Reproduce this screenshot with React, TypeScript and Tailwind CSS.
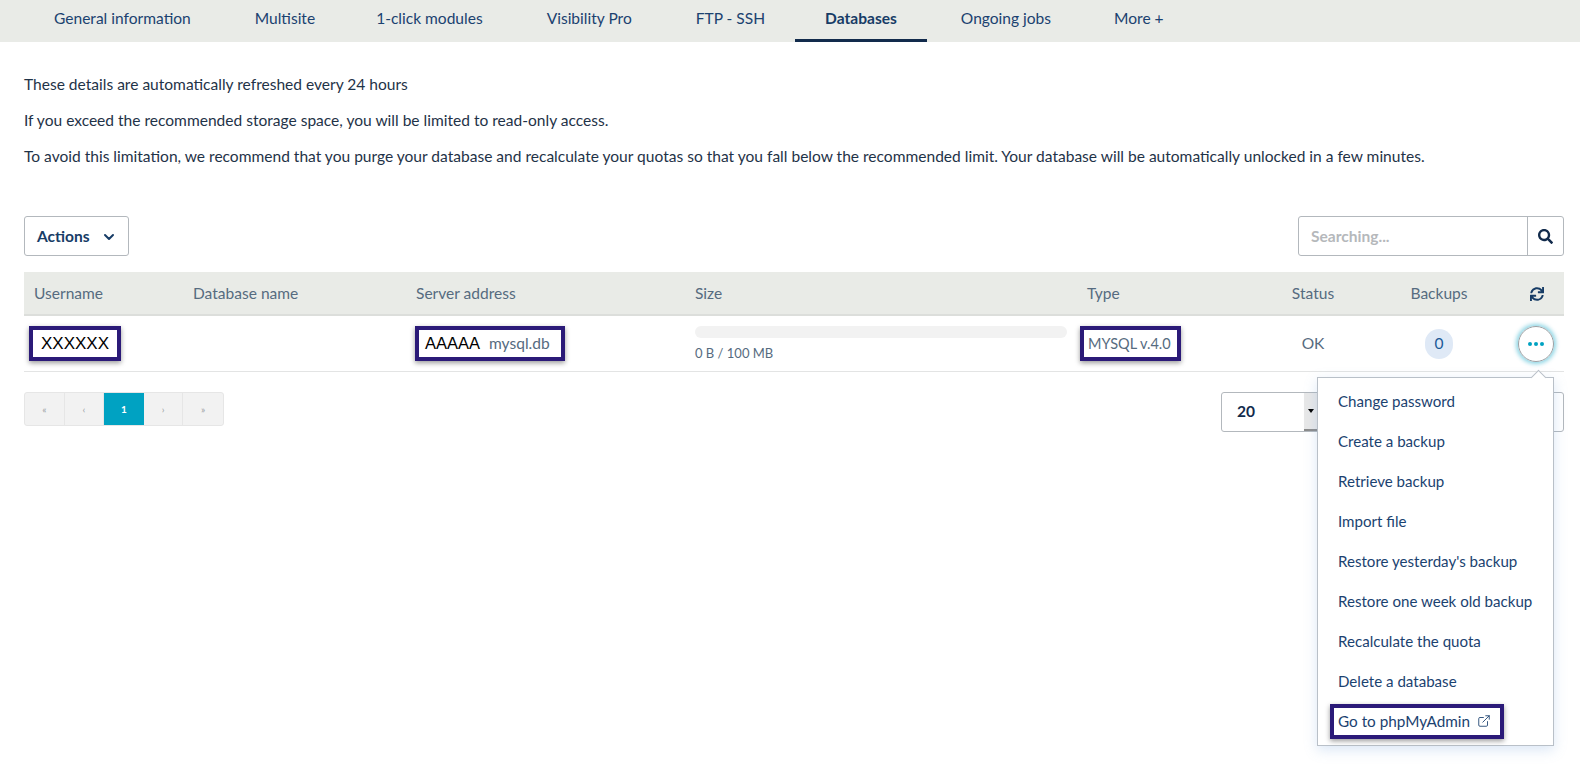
import { ChevronDown, ExternalLink } from 'lucide-react';
import { FaSearch, FaSync } from 'react-icons/fa';

const TAB = 'flex h-[42px] items-center pb-[4px] text-[#1b4270]';

const TABS = [
  { label: 'General information', className: `${TAB} px-[32px]` },
  { label: 'Multisite', className: `${TAB} pl-[32px] pr-[29px]` },
  { label: '1-click modules', className: `${TAB} px-[32px]` },
  { label: 'Visibility Pro', className: `${TAB} px-[32px]` },
  { label: 'FTP - SSH', className: `${TAB} pl-[32px] pr-[30px]` },
  {
    label: 'Databases',
    className:
      'flex h-[42px] items-center border-b-[3px] border-[#122b4c] px-[30px] pb-[1px] font-bold text-[#173c66]',
  },
  { label: 'Ongoing jobs', className: `${TAB} pl-[34px] pr-[31px]` },
  { label: 'More +', className: `${TAB} px-[32px]` },
];

const MENU = [
  'Change password',
  'Create a backup',
  'Retrieve backup',
  'Import file',
  "Restore yesterday's backup",
  'Restore one week old backup',
  'Recalculate the quota',
  'Delete a database',
];

const PAGES = ['«', '‹', '1', '›', '»'];

const GRID = 'grid grid-cols-[159px_223px_279px_392px_180px_112px_140px_55px] items-center';
const MARK = 'border-4 border-[#2b1a78] shadow-[0_2px_5px_rgba(0,0,0,0.4)] bg-white';

const App = () => {
  return (
    <div className="relative h-[764px] overflow-hidden bg-white font-['Lato',sans-serif] text-[15.55px] text-[#1b3a5c]">
      <nav className="flex h-[42px] bg-[#e9ebe7] pl-[22px]">
        {TABS.map(tab => (
          <a key={tab.label} className={tab.className}>
            {tab.label}
          </a>
        ))}
      </nav>

      <div className="pl-6 pr-4">
        <div className="flex flex-col gap-[18px] pt-[33px] text-[#1f3348]">
          <p className="leading-[18px]">These details are automatically refreshed every 24 hours</p>
          <p className="leading-[18px]">If you exceed the recommended storage space, you will be limited to read-only access.</p>
          <p className="leading-[18px]">
            To avoid this limitation, we recommend that you purge your database and recalculate your quotas so that you
            fall below the recommended limit. Your database will be automatically unlocked in a few minutes.
          </p>
        </div>

        <div className="mt-[51px] flex items-center justify-between">
          <button className="flex h-10 w-[105px] items-center gap-[11px] rounded-[3px] border border-[#b3b8bd] pl-3 pt-[1px] font-bold text-[#173c66]">
            Actions
            <ChevronDown size={16} strokeWidth={3} />
          </button>
          <div className="flex h-10 w-[266px] rounded-[3px] border border-[#b3b8bd]">
            <div className="flex flex-1 items-center pl-3 pt-[1px] font-bold text-[#b5b8bb]">Searching...</div>
            <div className="flex w-[36px] items-center justify-center border-l border-[#b3b8bd] text-[#122b4c]">
              <FaSearch size={15} />
            </div>
          </div>
        </div>

        <div className={`${GRID} mt-4 h-[44px] border-b-[2px] border-[#dcdedb] bg-[#e9ebe7] pt-[1px] text-[#566b80]`}>
          <span className="pl-[10px]">Username</span>
          <span className="pl-[10px]">Database name</span>
          <span className="pl-[10px]">Server address</span>
          <span className="pl-[10px]">Size</span>
          <span className="pl-[10px]">Type</span>
          <span className="text-center">Status</span>
          <span className="text-center">Backups</span>
          <span className="flex justify-center text-[#173c66]">
            <FaSync size={14} />
          </span>
        </div>

        <div className={`${GRID} h-[56px] border-b border-[#e3e4e4] text-[#566b80]`}>
          <div className="pl-[5px]">
            <span className={`${MARK} inline-flex h-[35px] w-[92px] items-center pl-[8px] font-['Liberation_Sans',sans-serif] text-[17px] text-black`}>
              XXXXXX
            </span>
          </div>
          <div />
          <div className="pl-[9px]">
            <span className={`${MARK} inline-flex h-[35px] w-[150px] items-center pl-[6px]`}>
              <span className="mr-[9px] font-['Liberation_Sans',sans-serif] text-[16.5px] text-black">AAAAA</span>
              mysql.db
            </span>
          </div>
          <div className="px-[10px] pb-[2px]">
            <div className="h-3 rounded-full bg-[#f2f2f2]" />
            <div className="mt-[8px] text-[13px] leading-[14px]">0 B / 100 MB</div>
          </div>
          <div className="pl-[3px]">
            <span className={`${MARK} inline-flex h-[35px] w-[101px] items-center whitespace-nowrap pl-[4px] text-[14.5px]`}>MYSQL v.4.0</span>
          </div>
          <span className="text-center">OK</span>
          <span className="flex justify-center">
            <span className="flex h-[30px] w-[28px] items-center justify-center rounded-full bg-[#dfe9f6] text-[#1b5a96]">0</span>
          </span>
          <span className="flex justify-center">
            <span className="-ml-[1px] flex h-9 w-9 items-center justify-center gap-[2px] rounded-full border border-[#9aa0a4] shadow-[0_0_4px_2px_rgba(0,161,195,0.45)]">
              <i className="h-1 w-1 rounded-full bg-[#00a2c2]" />
              <i className="h-1 w-1 rounded-full bg-[#00a2c2]" />
              <i className="h-1 w-1 rounded-full bg-[#00a2c2]" />
            </span>
          </span>
        </div>

        <div className="mt-[20px] flex items-start justify-between">
          <div className="flex h-[34px] w-[200px] overflow-hidden rounded-[3px] border border-[#e6e6e6] bg-[#f2f2f2] text-[10px] text-[#9aa0a4]">
            {PAGES.map(page => (
              <span
                key={page}
                className={
                  page === '1'
                    ? 'flex w-10 items-center justify-center bg-[#00a2c2] font-bold text-white'
                    : 'flex w-10 items-center justify-center border-r border-[#e6e6e6] last:border-r-0'
                }
              >
                {page}
              </span>
            ))}
          </div>
          <div className="flex h-10 w-[343px] items-center rounded-[3px] border border-[#b3b8bd] pl-[15px] font-bold text-[#122b4c]">
            20
            <span className="ml-[49px] flex h-[38px] w-[14px] items-center justify-center border-b-2 border-[#8c8c8c] bg-[#e8e8e8]">
              <span className="h-0 w-0 border-x-[3px] border-t-[4px] border-x-transparent border-t-black" />
            </span>
          </div>
        </div>
      </div>

      <div className="absolute left-[1317px] top-[377px] h-[369px] w-[237px] border border-[#b9c0c8] bg-white shadow-[0_4px_12px_rgba(110,160,220,0.25)]">
        <span className="absolute -top-[6px] right-[9px] h-[11px] w-[11px] rotate-45 border-l border-t border-[#b9c0c8] bg-white" />
        <ul className="flex flex-col pt-[3px] text-[15.1px] text-[#1b4270]">
          {MENU.map(item => (
            <li key={item} className="flex h-10 items-center whitespace-nowrap pl-5">
              {item}
            </li>
          ))}
          <li className="flex h-10 items-center pl-3">
            <span className={`${MARK} inline-flex h-[35px] w-[174px] items-center gap-[7px] whitespace-nowrap pl-[4px] text-[15.3px]`}>
              Go to phpMyAdmin
              <ExternalLink size={14} strokeWidth={1.5} />
            </span>
          </li>
        </ul>
      </div>
    </div>
  );
};

export default App;
